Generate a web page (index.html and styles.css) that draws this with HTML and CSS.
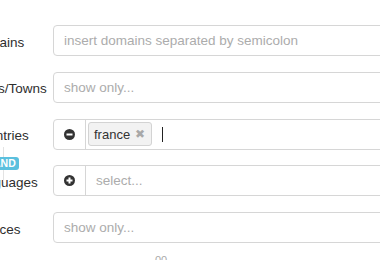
FILE: index.html
```html
<!DOCTYPE html>
<html lang="en">
<head>
  <meta charset="UTF-8" />
  <meta name="viewport" content="width=device-width, initial-scale=1" />
  <title>Filters</title>
  <link rel="stylesheet" href="styles.css">
</head>
<body>
  <form class="filters">
    <div class="row">
      <label class="row-label">Domains</label>
      <div class="field">
        <input class="text-input" type="text" placeholder="insert domains separated by semicolon">
      </div>
    </div>

    <div class="row">
      <label class="row-label">Cities/Towns</label>
      <div class="field">
        <input class="text-input" type="text" placeholder="show only...">
      </div>
    </div>

    <div class="row">
      <label class="row-label joined">
        Countries
        <span class="join-line"></span>
        <span class="badge">AND</span>
      </label>
      <div class="field group">
        <span class="addon">
          <svg width="11" height="11" viewBox="0 0 11 11">
            <circle cx="5.5" cy="5.5" r="5.5" fill="#333"/>
            <rect x="2.5" y="4.5" width="6" height="2" fill="#fff"/>
          </svg>
        </span>
        <div class="tag-input">
          <span class="tag">france <span class="tag-remove">&#10006;</span></span>
          <span class="caret"></span>
        </div>
      </div>
    </div>

    <div class="row">
      <label class="row-label">Languages</label>
      <div class="field group">
        <span class="addon">
          <svg width="11" height="11" viewBox="0 0 11 11">
            <circle cx="5.5" cy="5.5" r="5.5" fill="#333"/>
            <rect x="2.5" y="4.5" width="6" height="2" fill="#fff"/>
            <rect x="4.5" y="2.5" width="2" height="6" fill="#fff"/>
          </svg>
        </span>
        <input class="text-input flat" type="text" placeholder="select...">
      </div>
    </div>

    <div class="row">
      <label class="row-label">Sources</label>
      <div class="field">
        <input class="text-input" type="text" placeholder="show only...">
      </div>
    </div>

    <div class="footer-note">00</div>
  </form>
</body>
</html>
```

FILE: styles.css
```css
* {
  margin: 0;
  padding: 0;
  box-sizing: border-box;
}

body {
  background: #fff;
  font-family: 'Liberation Sans', Arial, sans-serif;
  font-size: 13.5px;
  color: #333;
  height: 100vh;
  overflow: hidden;
}

.filters {
  width: 560px;
  margin-left: -29px;
  padding-top: 25px;
  display: flex;
  flex-direction: column;
  gap: 15.75px;
}

.row {
  display: flex;
  align-items: center;
  height: 31px;
}

.row-label {
  width: 82px;
  flex-shrink: 0;
  color: #2e2e2e;
  padding-top: 3px;
}

.row-label.joined {
  position: relative;
}

.join-line {
  position: absolute;
  left: 32px;
  top: 22px;
  width: 1px;
  height: 35px;
  background: #e3e3e3;
}

.badge {
  position: absolute;
  left: 19px;
  top: 32px;
  background: #5bc0de;
  color: #fff;
  font-size: 10.5px;
  font-weight: bold;
  line-height: 13px;
  padding: 0 3px;
  border-radius: 3px;
}

.field {
  flex: 1;
  height: 100%;
}

.text-input {
  width: 100%;
  height: 100%;
  border: 1px solid #d6d6d6;
  border-radius: 4px;
  padding: 0 10px;
  font-family: inherit;
  font-size: 13.5px;
  color: #333;
  outline: none;
}

.text-input::placeholder {
  color: #acacac;
}

.field.group {
  display: flex;
  border: 1px solid #d6d6d6;
  border-radius: 4px;
}

.addon {
  width: 32px;
  flex-shrink: 0;
  display: flex;
  align-items: center;
  justify-content: center;
  border-right: 1px solid #d6d6d6;
}

.text-input.flat {
  border: none;
  border-radius: 0;
}

.tag-input {
  flex: 1;
  display: flex;
  align-items: center;
  padding: 0 2px;
}

.tag {
  display: inline-flex;
  align-items: center;
  height: 24px;
  padding: 0 6px 0 5px;
  background: #f2f2f2;
  border: 1px solid #d3d3d3;
  border-radius: 3px;
  color: #333;
  font-size: 13px;
}

.tag-remove {
  color: #a8a8a8;
  font-size: 12px;
  margin-left: 5px;
}

.caret {
  width: 1px;
  height: 15px;
  background: #222;
  margin-left: 10px;
}

.footer-note {
  margin-left: 184px;
  margin-top: -5px;
  color: #aaa;
  font-size: 11px;
}
```
